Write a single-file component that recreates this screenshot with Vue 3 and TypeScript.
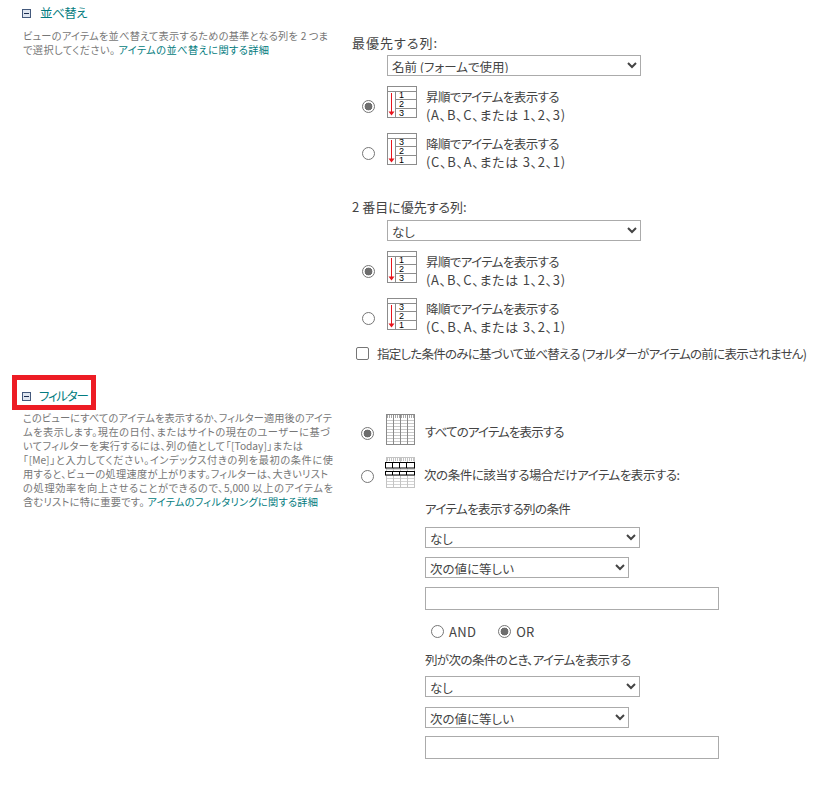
<script setup lang="ts">
interface DescLine { text: string; link?: string; width: number }

const sortOptions = [
  { title: '昇順でアイテムを表示する', hint: '(A、B、C、または 1、2、3)', digits: ['1', '2', '3'] },
  { title: '降順でアイテムを表示する', hint: '(C、B、A、または 3、2、1)', digits: ['3', '2', '1'] },
]
const sortGroups = [
  { label: '最優先する列:', value: '名前 (フォームで使用)', cls: 'first' },
  { label: '2 番目に優先する列:', value: 'なし', cls: 'second' },
]
const sortDesc: DescLine[] = [
  { text: 'ビューのアイテムを並べ替えて表示するための基準となる列を 2 つま', width: 305 },
  { text: 'で選択してください。 ', link: 'アイテムの並べ替えに関する詳細', width: 246 },
]
const filterDesc: DescLine[] = [
  { text: 'このビューにすべてのアイテムを表示するか、フィルター適用後のアイテ', width: 309 },
  { text: 'ムを表示します。現在の日付、またはサイトの現在のユーザーに基づ', width: 307 },
  { text: 'いてフィルターを実行するには、列の値として「[Today]」または', width: 280 },
  { text: '「[Me]」と入力してください。インデックス付きの列を最初の条件に使', width: 310 },
  { text: '用すると、ビューの処理速度が上がります。フィルターは、大きいリスト', width: 305 },
  { text: 'の処理効率を向上させることができるので、5,000 以上のアイテムを', width: 310 },
  { text: '含むリストに特に重要です。 ', link: 'アイテムのフィルタリングに関する詳細', width: 295 },
]
const rowLines = [3, 6, 9, 12, 15, 18, 21, 24]
const colLines = [7.5, 14.5, 21.5]
const filters = [
  { label: 'アイテムを表示する列の条件', first: 'なし', second: '次の値に等しい', cls: 'one' },
  { label: '列が次の条件のとき、アイテムを表示する', first: 'なし', second: '次の値に等しい', cls: 'two' },
]
</script>

<template>
  <div class="page">
    <section class="section sort">
      <div class="left">
        <h3 class="title">
          <svg class="toggle" width="9" height="9" viewBox="0 0 9 9"><rect x=".5" y=".5" width="8" height="8" fill="#dfe6f0" stroke="#44597c" /><path d="M2 4.5h5" stroke="#1d2f52" /></svg>
          <span>並べ替え</span>
        </h3>
        <p class="desc">
          <span v-for="l in sortDesc" :key="l.text" class="line" :style="{ width: l.width + 'px' }">{{ l.text }}<a v-if="l.link">{{ l.link }}</a></span>
        </p>
      </div>
      <div class="right">
        <div v-for="(g, gi) in sortGroups" :key="g.label" class="group" :class="g.cls">
          <div class="label">{{ g.label }}</div>
          <select class="sel sel-sort"><option>{{ g.value }}</option></select>
          <div v-for="(o, i) in sortOptions" :key="o.title" class="sort-row">
            <input type="radio" class="radio" :name="'s' + gi" :checked="i === 0" />
            <svg class="sort-icon" width="30" height="32" viewBox="0 0 30 32">
              <g fill="#fff" stroke="#8c8c8c">
                <rect x=".5" y=".5" width="29" height="31" />
                <path d="M.5 5.5h29M8.5 5.5v26M8.5 13.5h21M8.5 22.5h21" fill="none" />
              </g>
              <path d="M4.5 7v20" stroke="#e8141c" />
              <path d="M1.5 25.5h6l-3 4z" fill="#e8141c" />
              <text v-for="(d, di) in o.digits" :key="di" x="12" :y="11.5 + di * 9" class="digit">{{ d }}</text>
            </svg>
            <div class="sort-text">
              <div class="sort-title">{{ o.title }}</div>
              <div class="sort-hint">{{ o.hint }}</div>
            </div>
          </div>
        </div>
        <label class="check"><input type="checkbox" class="box" /><span>指定した条件のみに基づいて並べ替える (フォルダーがアイテムの前に表示されません)</span></label>
      </div>
    </section>

    <section class="section filter">
      <div class="left">
        <h3 class="title marked">
          <svg class="toggle" width="9" height="9" viewBox="0 0 9 9"><rect x=".5" y=".5" width="8" height="8" fill="#dfe6f0" stroke="#44597c" /><path d="M2 4.5h5" stroke="#1d2f52" /></svg>
          <span>フィルター</span>
        </h3>
        <p class="desc">
          <span v-for="l in filterDesc" :key="l.text" class="line" :style="{ width: l.width + 'px' }">{{ l.text }}<a v-if="l.link">{{ l.link }}</a></span>
        </p>
      </div>
      <div class="right">
        <div class="filter-row all">
          <input type="radio" class="radio" name="f" checked />
          <svg width="31" height="31" viewBox="0 0 31 31" class="table-icon">
            <g transform="translate(1 0)">
              <rect x=".5" y=".5" width="28" height="30" fill="#fff" stroke="#8a8a8a" />
              <path d="M1 2.5h27" stroke="#a8a8a8" stroke-width="3" stroke-dasharray="1 1" />
              <path v-for="y in rowLines" :key="y" :d="`M1 ${y + 3.5}h27`" stroke="#c9c9c9" />
              <path v-for="x in colLines" :key="x" :d="`M${x} 1v29`" stroke="#8a8a8a" />
            </g>
          </svg>
          <span class="row-text all-text">すべてのアイテムを表示する</span>
        </div>
        <div class="filter-row some">
          <input type="radio" class="radio" name="f" />
          <svg width="31" height="31" viewBox="0 0 31 31" class="table-icon">
            <g transform="translate(1 0)">
              <rect x=".5" y=".5" width="28" height="30" fill="#fff" stroke="#c4c4c4" />
              <path d="M1 2.5h27" stroke="#c4c4c4" stroke-width="3" stroke-dasharray="1 1" />
              <path v-for="y in rowLines" :key="y" :d="`M1 ${y + 3.5}h27`" stroke="#d4d4d4" />
              <path v-for="x in colLines" :key="x" :d="`M${x} 1v29`" stroke="#c4c4c4" />
            </g>
            <g fill="#fff" stroke="#000">
              <rect x=".5" y="5.5" width="29" height="5.5" />
              <rect x=".5" y="14.5" width="29" height="3.5" />
              <path d="M7.5 5.5v5.5M14.5 5.5v5.5M21.5 5.5v5.5M7.5 14.5v3.5M14.5 14.5v3.5M21.5 14.5v3.5" fill="none" />
            </g>
          </svg>
          <span class="row-text some-text">次の条件に該当する場合だけアイテムを表示する:</span>
        </div>
        <div class="conditions">
          <div v-for="(f, fi) in filters" :key="fi" :class="f.cls">
            <div class="cond-label">{{ f.label }}</div>
            <select class="sel sel-a"><option>{{ f.first }}</option></select>
            <select class="sel sel-b"><option>{{ f.second }}</option></select>
            <input class="text" type="text" />
            <div v-if="fi === 0" class="andor">
              <label><input type="radio" class="radio" name="j" />AND</label>
              <label><input type="radio" class="radio" name="j" checked />OR</label>
            </div>
          </div>
        </div>
      </div>
    </section>
  </div>
</template>

<style>
html, body { margin: 0; background: #fff; }
</style>

<style scoped>
.page {
  width: 820px;
  height: 793px;
  overflow: hidden;
  font-family: "Noto Sans CJK JP", "Noto Sans", sans-serif;
  font-feature-settings: "palt";
  color: #444;
  font-size: 13px;
}
.section { display: grid; grid-template-columns: 352px 1fr; }
.sort { height: 375px; }
.left { padding-left: 23px; box-sizing: border-box; }
.title {
  margin: 0 0 0 -1px;
  font-weight: 400;
  font-size: 12.5px;
  letter-spacing: -.5px;
  line-height: 18px;
  color: #037c80;
  display: flex;
  align-items: center;
  gap: 9px;
  padding-top: 4px;
  white-space: nowrap;
}
.toggle { flex: none; }
.desc {
  margin: 7px 0 0;
  font-size: 10.2px;
  line-height: 14px;
  color: #777;
}
.line { display: block; text-align: justify; text-align-last: justify; }
.desc a { color: #037c80; }
.filter .title.marked {
  width: 84px;
  height: 35px;
  box-sizing: border-box;
  border: 5px solid #ed1c24;
  margin-left: -11px;
  padding: 7px 0 0 5px;
  gap: 8px;
  letter-spacing: -1.2px;
}
.filter .desc { margin-top: 1px; }
.right { min-width: 0; }
.group.first { padding-top: 34px; }
.group.second { padding-top: 33px; }
.label { line-height: 18px; }
.first .label { letter-spacing: 1px; }
.sel {
  display: block;
  box-sizing: border-box;
  height: 21px;
  border: 1px solid #ababab;
  border-radius: 0;
  background-color: #fff;
  font: inherit;
  font-size: 12.5px;
  color: #444;
  padding: 0 0 2px;
}
.sel-sort { width: 254px; margin: 3px 0 0 35px; }
.second .sel-sort { margin-top: 4px; }
.sort-row {
  display: flex;
  align-items: flex-start;
  margin-top: 15px;
  height: 32px;
}
.sel-sort + .sort-row { margin-top: 10px; }
.radio {
  appearance: none;
  width: 13px;
  height: 13px;
  margin: 0;
  flex: none;
  border: 1px solid #767676;
  border-radius: 50%;
  background: #fff;
  box-sizing: border-box;
}
.radio:checked {
  background: radial-gradient(circle, #6e6e6e 0 3.6px, #fff 4.2px);
}
.sort-row .radio { margin: 14px 12px 0 10px; }
.sort-icon { flex: none; }
.sort-text { margin-left: 9px; line-height: 18px; margin-top: 2px; white-space: nowrap; }
.sort-title { font-size: 12.5px; letter-spacing: -.6px; }
.sort-hint { letter-spacing: .7px; }
.digit { font: 9px "Liberation Sans", sans-serif; fill: #000; }
.check {
  display: flex;
  align-items: center;
  margin-top: 14px;
  height: 18px;
  padding-left: 4px;
  font-size: 12.5px;
  letter-spacing: -.75px;
  white-space: nowrap;
}
.box {
  appearance: none;
  width: 13px;
  height: 13px;
  margin: 0 8px 0 0;
  border: 1px solid #767676;
  border-radius: 2px;
  background: #fff;
}
.filter-row { display: flex; align-items: flex-start; height: 31px; }
.filter-row .radio { margin: 13px 12px 0 9px; }
.filter-row .table-icon { flex: none; margin-right: 8px; margin-left: -1px; }
.row-text { line-height: 18px; margin-top: 9px; font-size: 12.5px; white-space: nowrap; }
.all-text { letter-spacing: -.85px; margin-left: 1px; }
.some-text { letter-spacing: -.45px; }
.all { margin-top: 39px; }
.some { margin-top: 12px; }
.conditions { padding-left: 73px; }
.cond-label { line-height: 18px; margin-top: 12px; font-size: 12.5px; letter-spacing: -.6px; }
.sel-a { width: 215px; margin-top: 9px; }
.sel-b { width: 204px; margin-top: 9px; }
.text {
  display: block;
  box-sizing: border-box;
  width: 294px;
  height: 23px;
  margin-top: 9px;
  border: 1px solid #ababab;
  background: #fff;
  padding: 0;
}
.two .cond-label { margin-top: 11px; }
.two .sel-a { margin-top: 7px; }
.two .sel-b { margin-top: 10px; }
.two .text { margin-top: 8px; }
.andor { display: flex; gap: 22px; margin: 12px 0 0 6px; height: 18px; align-items: center; letter-spacing: .3px; }
.andor label { display: flex; align-items: center; gap: 5px; }
</style>
